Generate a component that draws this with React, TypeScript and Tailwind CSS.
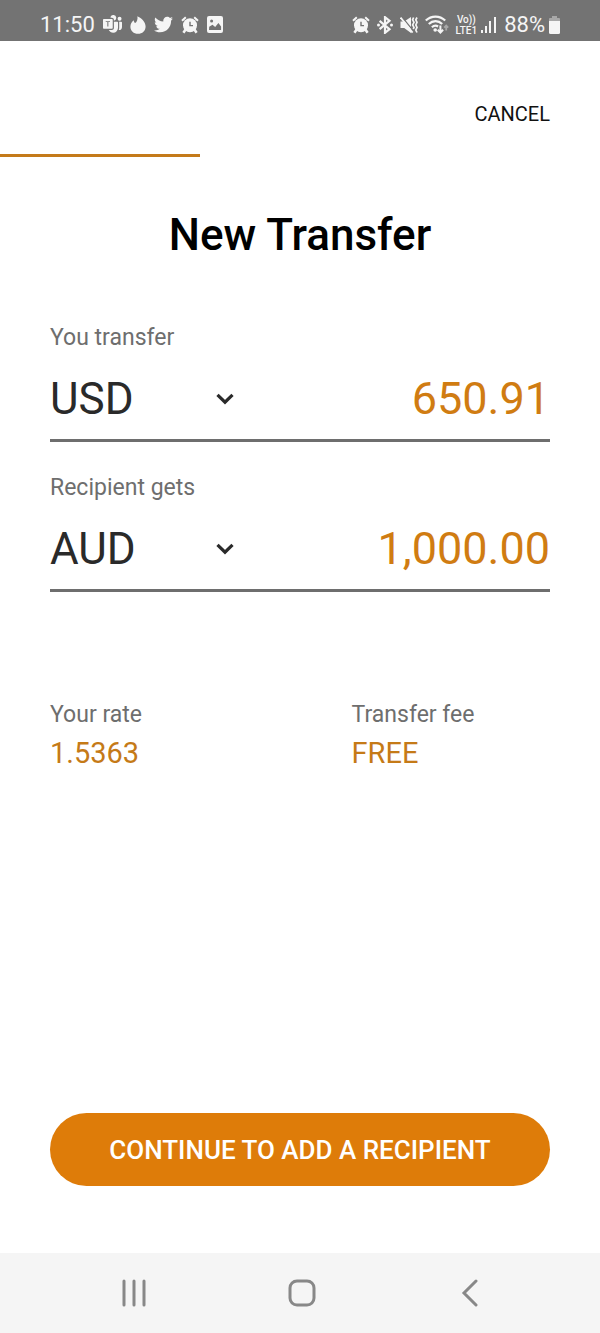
import { useState } from 'react'
import { FaTwitter } from 'react-icons/fa'
import { BsMicrosoftTeams } from 'react-icons/bs'

const CURRENCIES = ['USD', 'AUD', 'EUR', 'GBP', 'NZD']

// ── Icons ─────────────────────────────────────────────────────────────────────

function AlarmIcon() {
  return (
    <svg width="18" height="18" viewBox="0 0 18 18" fill="none" aria-hidden="true">
      <circle cx="9" cy="9.2" r="7" fill="currentColor" />
      <path d="M1 4.8 4.8 1.2M17 4.8l-3.8-3.6" stroke="currentColor" strokeWidth="2" />
      <path d="m4.6 13.6-2.2 3.2M13.4 13.6l2.2 3.2" stroke="currentColor" strokeWidth="2.6" />
      <path d="M9 5.8v3.8h3" stroke="#737373" strokeWidth="1.4" />
    </svg>
  )
}

function FlameIcon() {
  return (
    <svg width="16" height="18" viewBox="0 0 16 18" fill="currentColor" aria-hidden="true">
      <path d="M7.4.2c3.4 1.6 8.2 5.2 8.2 10.2 0 4.3-3.2 7.4-7.6 7.4S.4 14.8.4 10.7C.4 8 1.8 5.4 3.7 4.2c.2 1.3.7 2.4 1.5 2.9C7 5.8 7.9 3.2 7.4.2Z" />
    </svg>
  )
}

function PictureIcon() {
  return (
    <svg width="16" height="17" viewBox="0 0 16 17" aria-hidden="true">
      <rect width="16" height="17" rx="2" fill="currentColor" />
      <circle cx="4.6" cy="5" r="1.5" fill="#737373" />
      <path d="m2 14 .2-3.3 3.3-2 2.7 2.3 3.2-4 2.7 3.5V14Z" fill="#737373" />
    </svg>
  )
}

function BluetoothIcon() {
  return (
    <svg width="16" height="18" viewBox="0 0 16 18" fill="none" aria-hidden="true">
      <path d="m2.6 4.8 9.9 8.4L8 16.8V1.2l4.5 3.6-9.9 8.4" stroke="currentColor" strokeWidth="2.2" />
      <circle cx="1.5" cy="9" r="1.5" fill="currentColor" />
      <circle cx="14.5" cy="9" r="1.5" fill="currentColor" />
    </svg>
  )
}

function MutedIcon() {
  return (
    <svg width="18" height="18" viewBox="0 0 18 18" fill="none" aria-hidden="true">
      <path d="M.5 5.5h3.7L11 1v16l-6.800-5H.5Z" fill="currentColor" />
      <path d="m2 1 11 13.5" stroke="#737373" strokeWidth="1.2" />
      <path d="m.6 1.6 12 15" stroke="currentColor" strokeWidth="1.8" />
      <path
        d="m13.600 1.500-1 2.300 1.400 2.500-1.400 2.600 1.400 2.500-.8 1.600M17 1.500l-1.200 2.300L17 6.300l-1.200 2.600 1.200 2.500-1.200 2.600 1.200 2.500"
        stroke="currentColor"
        strokeWidth="1.7"
      />
    </svg>
  )
}

function WifiIcon() {
  return (
    <svg width="24" height="19" viewBox="0 0 24 19" fill="none" aria-hidden="true">
      <path
        d="M.8 5.5c5.500-5.300 13.900-5.300 19.400 0M3.800 9c3.900-3.800 9.500-3.800 13.400 0M6.900 12.300c1.900-1.700 4.300-1.900 6.200-.8"
        stroke="currentColor"
        strokeWidth="2.2"
      />
      <circle cx="10.2" cy="15" r="1.8" fill="currentColor" />
      <path d="M15.4 10.5v7m-2.7-2.7 2.7 2.7 2.7-2.7" stroke="currentColor" strokeWidth="2" />
      <path d="M21.2 15.5v-5m-2 2.2 2-2.2 2 2.2" stroke="#a8a8a8" strokeWidth="1.8" />
    </svg>
  )
}

function SignalIcon() {
  return (
    <svg width="16" height="18" viewBox="0 0 16 18" fill="currentColor" aria-hidden="true">
      <rect y="14" width="2" height="3" />
      <rect x="4" y="10" width="2" height="7" />
      <rect x="8" y="5" width="2" height="12" />
      <rect x="13" y="1" width="2" height="16" />
    </svg>
  )
}

function BatteryIcon() {
  return (
    <svg width="11" height="18" viewBox="0 0 11 18" aria-hidden="true">
      <path d="M3 0h5v2h2a1 1 0 0 1 1 1v3H0V3a1 1 0 0 1 1-1h2Z" fill="#a8a8a8" />
      <path d="M0 5h11v11.5a1.5 1.5 0 0 1-1.5 1.5h-8A1.5 1.5 0 0 1 0 16.5Z" fill="currentColor" />
    </svg>
  )
}

// ── Form parts ────────────────────────────────────────────────────────────────

type MoneyFieldProps = {
  id: string
  label: string
  currency: string
  amount: string
  onCurrency: (value: string) => void
  onAmount: (value: string) => void
}

function MoneyField({ id, label, currency, amount, onCurrency, onAmount }: MoneyFieldProps) {
  return (
    <div className="border-b-3 border-[#6e6e6e]">
      <label htmlFor={id} className="block text-[23px] leading-[34px] text-[#6e6e6e]">
        {label}
      </label>
      <div className="flex h-21 items-center justify-between pt-1">
        <div className="relative w-48 shrink-0">
          <select
            aria-label={`${label} currency`}
            value={currency}
            onChange={(e) => onCurrency(e.target.value)}
            className="w-full appearance-none bg-transparent text-[44px] leading-14 text-[#2a2a2a] outline-none"
          >
            {CURRENCIES.map((c) => (
              <option key={c}>{c}</option>
            ))}
          </select>
          <svg
            width="18"
            height="12"
            viewBox="0 0 18 12"
            fill="none"
            aria-hidden="true"
            className="pointer-events-none absolute top-1/2 right-2 -translate-y-1/2"
          >
            <path d="m1.5 1.8 7.5 7.4 7.5-7.4" stroke="#2a2a2a" strokeWidth="3.2" />
          </svg>
        </div>
        <input
          id={id}
          inputMode="decimal"
          value={amount}
          onChange={(e) => onAmount(e.target.value)}
          className="w-full min-w-0 bg-transparent text-right text-[45px] leading-14 text-[#d07c12] outline-none"
        />
      </div>
    </div>
  )
}

function Detail({ label, value }: { label: string; value: string }) {
  return (
    <div>
      <dt className="text-[23px] leading-[34px] text-[#6e6e6e]">{label}</dt>
      <dd className="text-[29px] leading-[42px] text-[#c57a17]">{value}</dd>
    </div>
  )
}

// ── Main page ─────────────────────────────────────────────────────────────────

export default function App() {
  const [from, setFrom] = useState('USD')
  const [to, setTo] = useState('AUD')
  const [sent, setSent] = useState('650.91')
  const [received, setReceived] = useState('1,000.00')

  return (
    <div className="flex min-h-screen flex-col bg-white font-['Roboto',sans-serif]">
      {/* Status bar */}
      <div className="flex h-[41px] items-center justify-between bg-[#737373] px-10 pt-2 text-[#f5f5f5]">
        <div className="flex items-center gap-2">
          <span className="text-[22px]">11:50</span>
          <BsMicrosoftTeams size={19} />
          <FlameIcon />
          <FaTwitter size={19} />
          <AlarmIcon />
          <PictureIcon />
        </div>
        <div className="flex items-center gap-[7px]">
          <AlarmIcon />
          <BluetoothIcon />
          <MutedIcon />
          <WifiIcon />
          <div className="flex items-center gap-1">
            <div className="text-center text-[10px] leading-[11px] font-medium">
              <div>Vo))</div>
              <div>LTE1</div>
            </div>
            <SignalIcon />
          </div>
          <div className="flex items-center gap-1">
            <span className="text-[22px]">88%</span>
            <BatteryIcon />
          </div>
        </div>
      </div>

      {/* Header with step progress */}
      <header className="flex h-[113px] items-center justify-end px-[50px] pt-8">
        <button type="button" className="text-[20px] leading-8 text-[#111111]">
          CANCEL
        </button>
      </header>
      <div className="h-[3px] w-1/3 bg-[#c47a1a]" />

      <main className="flex flex-1 flex-col px-[50px] pt-12 pb-[67px]">
        <h1 className="text-center text-[44px] leading-15 font-medium text-black">New Transfer</h1>

        <form className="mt-14 flex flex-col gap-[29px]" onSubmit={(e) => e.preventDefault()}>
          <MoneyField
            id="sent"
            label="You transfer"
            currency={from}
            amount={sent}
            onCurrency={setFrom}
            onAmount={setSent}
          />
          <MoneyField
            id="received"
            label="Recipient gets"
            currency={to}
            amount={received}
            onCurrency={setTo}
            onAmount={setReceived}
          />
        </form>

        <dl className="mt-[106px] grid grid-cols-[3fr_2fr] gap-1">
          <Detail label="Your rate" value="1.5363" />
          <Detail label="Transfer fee" value="FREE" />
        </dl>

        <button
          type="button"
          className="mt-auto h-[73px] rounded-full bg-[#de7c09] pt-0.5 text-[26px] font-medium text-white"
        >
          CONTINUE TO ADD A RECIPIENT
        </button>
      </main>

      {/* System navigation */}
      <nav className="flex h-20 items-center justify-between bg-[#f5f5f5] px-[116px] text-[#888888]">
        <button type="button" aria-label="Recent apps">
          <svg width="32" height="28" viewBox="0 0 32 28" fill="none" aria-hidden="true">
            <path d="M8 2v24M18 2v24M28 2v24" stroke="currentColor" strokeWidth="3" strokeLinecap="round" />
          </svg>
        </button>
        <button type="button" aria-label="Home">
          <svg width="28" height="28" viewBox="0 0 28 28" fill="none" aria-hidden="true">
            <rect x="2" y="2" width="24" height="24" rx="7" stroke="currentColor" strokeWidth="3" />
          </svg>
        </button>
        <button type="button" aria-label="Back">
          <svg width="28" height="28" viewBox="0 0 28 28" fill="none" aria-hidden="true">
            <path d="M20 2 8 14l12 12" stroke="currentColor" strokeWidth="3" strokeLinecap="round" />
          </svg>
        </button>
      </nav>
    </div>
  )
}
